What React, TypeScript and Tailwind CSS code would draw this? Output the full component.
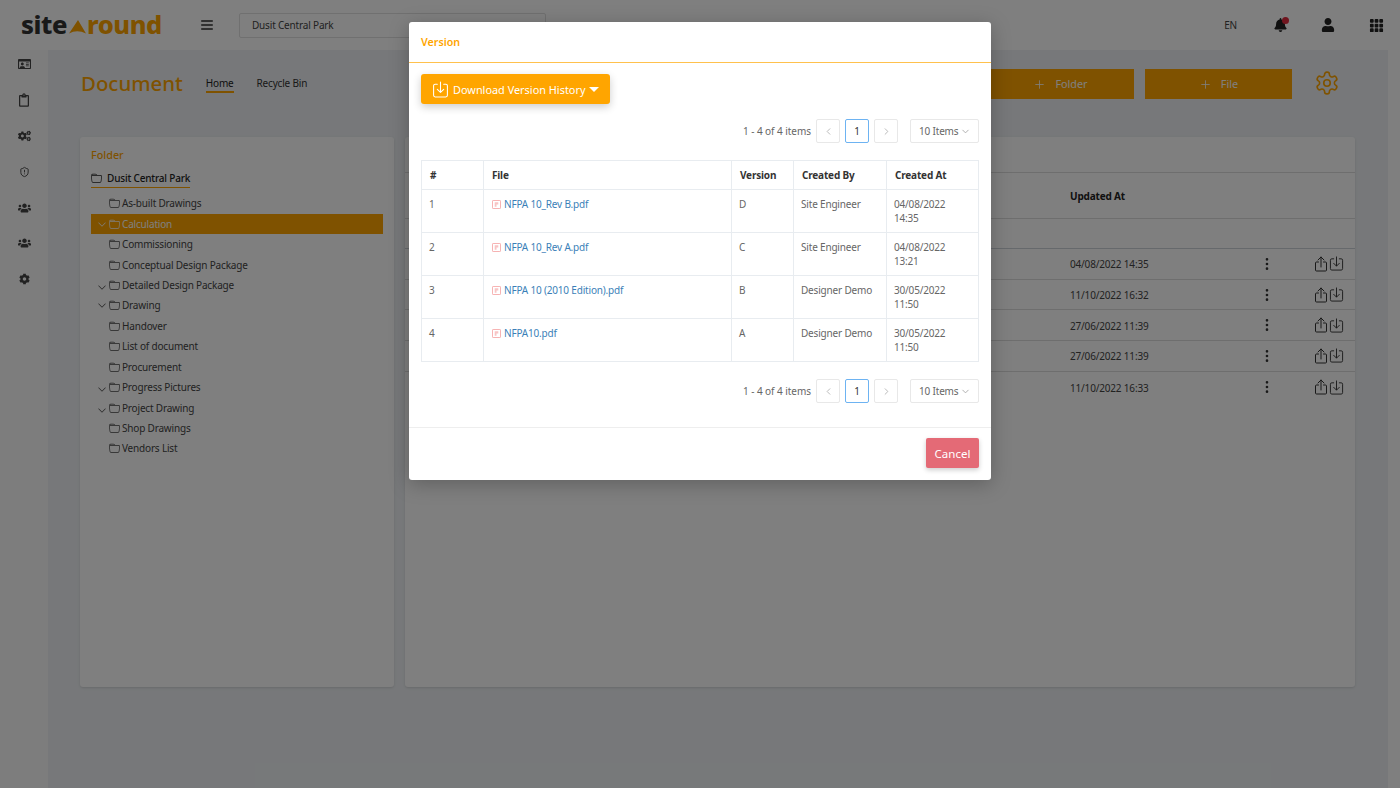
import React from 'react';
import { BsFolder, BsChevronDown, BsGrid3X3GapFill } from 'react-icons/bs';
import { FaBell, FaUser, FaUsers, FaCog, FaCogs, FaRegClipboard, FaRegIdCard } from 'react-icons/fa';
import { LuSettings, LuChevronLeft, LuChevronRight, LuChevronDown, LuMenu, LuShieldAlert, LuEllipsisVertical, LuPlus } from 'react-icons/lu';

const folders = [
  { name: 'As-built Drawings' },
  { name: 'Calculation', arrow: true, active: true },
  { name: 'Commissioning' },
  { name: 'Conceptual Design Package' },
  { name: 'Detailed Design Package', arrow: true, low: true },
  { name: 'Drawing', arrow: true },
  { name: 'Handover' },
  { name: 'List of document' },
  { name: 'Procurement' },
  { name: 'Progress Pictures', arrow: true, low: true },
  { name: 'Project Drawing', arrow: true, low: true },
  { name: 'Shop Drawings' },
  { name: 'Vendors List' },
];

const updates = ['04/08/2022 14:35', '11/10/2022 16:32', '27/06/2022 11:39', '27/06/2022 11:39', '11/10/2022 16:33'];

const versions = [
  { no: 1, file: 'NFPA 10_Rev B.pdf', version: 'D', by: 'Site Engineer', date: '04/08/2022', time: '14:35' },
  { no: 2, file: 'NFPA 10_Rev A.pdf', version: 'C', by: 'Site Engineer', date: '04/08/2022', time: '13:21' },
  { no: 3, file: 'NFPA 10 (2010 Edition).pdf', version: 'B', by: 'Designer Demo', date: '30/05/2022', time: '11:50' },
  { no: 4, file: 'NFPA10.pdf', version: 'A', by: 'Designer Demo', date: '30/05/2022', time: '11:50' },
];

const DownloadIcon = ({ className }: { className: string }) => (
  <svg viewBox="0 0 16 16" fill="none" stroke="currentColor" strokeWidth="1" strokeLinecap="round" strokeLinejoin="round" className={className}>
    <path d="M5 3H3a1.5 1.5 0 0 0-1.5 1.5v9A1.5 1.5 0 0 0 3 15h10a1.5 1.5 0 0 0 1.5-1.5v-9A1.5 1.5 0 0 0 13 3h-2" />
    <path d="M8 1v9.5M5 7.8l3 3 3-3" />
  </svg>
);

const ShareIcon = ({ className }: { className: string }) => (
  <svg viewBox="0 0 14 16" fill="none" stroke="currentColor" strokeWidth="1" strokeLinecap="round" strokeLinejoin="round" className={className}>
    <path d="M4.5 6H2.5a1 1 0 0 0-1 1v7a1 1 0 0 0 1 1h9a1 1 0 0 0 1-1V7a1 1 0 0 0-1-1h-2" />
    <path d="M7 11V1M4 4l3-3 3 3" />
  </svg>
);

const PdfIcon = () => (
  <svg viewBox="0 0 10 10" fill="none" className="w-[9px] h-[9px] shrink-0">
    <rect x="0.5" y="0.5" width="9" height="9" rx="0.8" stroke="#f5a5a5" />
    <path d="M3 2.5h4v2.5H5v2.5H3z" fill="#f8c4c4" />
  </svg>
);

const Pager = () => (
  <div className="flex items-center justify-end text-[#666]">
    <span className="mr-[5px] tracking-[-0.05px]">1 - 4 of 4 items</span>
    <div className="w-[24px] h-[24px] border border-[#e8e8e8] rounded-[2px] flex items-center justify-center text-[#b5b5b5]">
      <LuChevronLeft className="w-[11px] h-[11px]" />
    </div>
    <div className="w-[24px] h-[24px] ml-[5px] border border-[#6db3f2] rounded-[2px] flex items-center justify-center text-[#333]">1</div>
    <div className="w-[24px] h-[24px] ml-[5px] border border-[#e8e8e8] rounded-[2px] flex items-center justify-center text-[#b5b5b5]">
      <LuChevronRight className="w-[11px] h-[11px]" />
    </div>
    <div className="w-[69px] h-[24px] ml-[12px] pl-[8px] pr-[7px] border border-[#e8e8e8] rounded-[2px] flex items-center justify-between whitespace-nowrap text-[#666]">
      <span>10 Items</span>
      <LuChevronDown className="w-[11px] h-[11px] text-[#aaa]" />
    </div>
  </div>
);

const VersionModal = () => (
  <div className="absolute left-[409px] top-[22px] w-[582px] h-[458px] bg-white rounded-[3px] shadow-[0_4px_20px_rgba(0,0,0,0.25)] flex flex-col">
    <div className="h-[41px] px-[12px] flex items-center border-b border-[#ffc14d] text-[10.7px] tracking-normal font-semibold text-[#ffa500]">Version</div>
    <div className="px-[12px] pt-[11px] flex-1">
      <button className="w-[189px] h-[30px] bg-[#ffa500] rounded-[3px] text-white text-[10.9px] tracking-normal flex items-center pl-[11px] shadow-[0_3px_8px_rgba(0,0,0,0.2)]">
        <DownloadIcon className="w-[17px] h-[19px] mr-[4px]" />
        <span className="pt-[2px]">Download Version History</span>
        <span className="ml-[4px] w-0 h-0 border-x-[5px] border-x-transparent border-t-[5px] border-t-white" />
      </button>
      <div className="mt-[15px]"><Pager /></div>
      <div className="mt-[17px] border-t border-l border-[#e8ecf0] grid grid-cols-[62px_248px_62px_93px_92px] text-[#666]">
        {['#', 'File', 'Version', 'Created By', 'Created At'].map((h) => (
          <div key={h} className="h-[29px] px-[8px] pt-[1px] flex items-center font-bold text-[#333] border-r border-b border-[#e8ecf0]">{h}</div>
        ))}
        {versions.map((v) => (
          <React.Fragment key={v.no}>
            <div className="h-[43px] px-[7px] pt-[7px] leading-[14px] border-r border-b border-[#e8ecf0]">{v.no}</div>
            <div className="h-[43px] px-[8px] pt-[7px] leading-[14px] border-r border-b border-[#e8ecf0] flex items-start gap-[3px] text-[#3b7fb8]">
              <span className="mt-[3px]"><PdfIcon /></span>
              <span>{v.file}</span>
            </div>
            <div className="h-[43px] px-[7px] pt-[7px] leading-[14px] border-r border-b border-[#e8ecf0]">{v.version}</div>
            <div className="h-[43px] px-[7px] pt-[7px] leading-[14px] border-r border-b border-[#e8ecf0]">{v.by}</div>
            <div className="h-[43px] px-[7px] pt-[7px] leading-[14px] border-r border-b border-[#e8ecf0]">{v.date}<br />{v.time}</div>
          </React.Fragment>
        ))}
      </div>
      <div className="mt-[17px]"><Pager /></div>
    </div>
    <div className="h-[53px] px-[12px] pb-[2px] border-t border-[#eeeeee] flex items-center justify-end">
      <button className="w-[53px] h-[30px] pt-[1px] bg-[#e46a76] rounded-[2px] text-white text-[11.5px] tracking-normal shadow-[0_2px_5px_rgba(0,0,0,0.2)]">Cancel</button>
    </div>
  </div>
);

const App = () => {
  return (
    <div className="relative w-[1400px] h-[788px] overflow-hidden bg-white text-[10px] tracking-[-0.18px] text-[#333] font-['Noto_Sans','Open_Sans',sans-serif]">
      <header className="h-[50px] bg-white flex items-center">
        <div className="w-[207px] pl-[21px] flex items-center text-[25.5px] font-extrabold leading-none tracking-[-0.45px]">
          <span className="text-[#333]">site</span>
          <svg viewBox="0 0 20 14" className="w-[20px] h-[14px] mt-[3px]"><path d="M11 0l8 13.5Q10 9 2 13.5z" fill="#ffa500" /></svg>
          <span className="text-[#ffa500]">round</span>
        </div>
        <LuMenu className="w-[16px] h-[16px] -ml-[8px] text-[#333]" />
        <div className="w-[307px] h-[25px] ml-[24px] px-[12px] pt-[1px] border border-[#e0e0e0] rounded-[2px] flex items-center text-[#444]">Dusit Central Park</div>
        <div className="flex-1" />
        <span className="text-[#444] pt-[1px] mr-[37px]">EN</span>
        <div className="relative mr-[34px]">
          <FaBell className="w-[13px] h-[14px] text-[#222]" />
          <span className="absolute -top-[1px] right-[-2px] w-[7px] h-[7px] rounded-full bg-[#e0283c]" />
        </div>
        <FaUser className="w-[14px] h-[14px] mr-[34px] text-[#222]" />
        <BsGrid3X3GapFill className="w-[15px] h-[15px] mr-[16px] text-[#222]" />
      </header>
      <div className="flex h-[738px]">
        <aside className="w-[48px] bg-[#fbfbfb] flex flex-col items-center pt-[6px] gap-[19.9px] text-[#444]">
          <FaRegIdCard className="w-[13px] h-[16px]" />
          <FaRegClipboard className="w-[10px] h-[16px]" />
          <FaCogs className="w-[13px] h-[16px]" />
          <LuShieldAlert className="w-[11px] h-[16px]" />
          <FaUsers className="w-[13px] h-[16px]" />
          <FaUsers className="w-[13px] h-[16px]" />
          <FaCog className="w-[11px] h-[16px]" />
        </aside>
        <main className="w-[1340px] bg-[#eef1f4] flex flex-col">
          <div className="h-[87px] pl-[33px] pr-[48px] flex items-start">
            <h1 className="mt-[17px] text-[20.4px] tracking-normal leading-[32px] font-medium text-[#ffa500]">Document</h1>
            <div className="ml-[23px] mt-[26px] pb-[1px] border-b-2 border-[#ffa500] leading-[14px] text-[#222]">Home</div>
            <div className="ml-[23px] mt-[26px] leading-[14px] text-[#333]">Recycle Bin</div>
            <div className="flex-1" />
            <button className="w-[147px] h-[30px] mt-[19px] bg-[#ffa500] text-white text-[10.8px] tracking-normal flex items-center justify-center gap-[9px]"><LuPlus className="w-[13px] h-[13px] stroke-[1.5]" /><span className="pt-[1px]">Folder</span></button>
            <button className="w-[147px] h-[30px] mt-[19px] ml-[11px] bg-[#ffa500] text-white text-[10.8px] tracking-normal flex items-center justify-center gap-[9px]"><LuPlus className="w-[13px] h-[13px] stroke-[1.5]" /><span className="pt-[1px]">File</span></button>
            <LuSettings className="w-[26px] h-[26px] mt-[20px] ml-[22px] text-[#ffa500] stroke-[1.5]" />
          </div>
          <div className="flex pl-[32px] gap-[11px]">
            <section className="w-[314px] h-[550px] bg-white rounded-[3px] px-[11px] pt-[11px] shadow-sm">
              <div className="text-[10.8px] tracking-normal leading-[14px] font-medium text-[#ffa500]">Folder</div>
              <div className="mt-[9px] flex w-fit items-center gap-[5px] pt-[1px] pb-[2px] leading-[13px] border-b border-[#ffa500] font-medium text-[#222]">
                <BsFolder className="w-[11px] h-[11px]" />Dusit Central Park
              </div>
              <ul className="mt-[5.5px]">
                {folders.map((f) => (
                  <li key={f.name} className={`h-[20.45px] flex items-center ${f.active ? 'bg-[#ffa500] text-white' : 'text-[#444]'}`}>
                    <span className={`w-[18px] pl-[6px] ${f.low ? 'pt-[4px]' : ''}`}>{f.arrow && <BsChevronDown className="w-[10px] h-[9px]" />}</span>
                    <BsFolder className="w-[11px] h-[11px] mr-[2px]" />{f.name}
                  </li>
                ))}
              </ul>
            </section>
            <section className="w-[950px] h-[550px] bg-white rounded-[3px] shadow-sm">
              <div className="h-[36px] border-b border-[#dcdcdc]" />
              <div className="h-[46px] pl-[665px] pt-[1px] flex items-center font-bold text-[#222] border-b border-[#dcdcdc]">Updated At</div>
              <div className="h-[30px] border-b border-[#ccd2d8]" />
              {updates.map((u, i) => (
                <div key={i} className={`h-[30.7px] pl-[665px] flex items-center text-[#444] ${i < 4 ? 'border-b border-[#dcdcdc]' : ''}`}>
                  <span className="w-[189px] pt-[2px]">{u}</span>
                  <LuEllipsisVertical className="w-[16px] h-[18px] text-[#333]" />
                  <span className="w-[39px]" />
                  <ShareIcon className="w-[14px] h-[16px] text-[#333]" />
                  <DownloadIcon className="w-[15px] h-[15px] ml-[1px] text-[#333]" />
                </div>
              ))}
            </section>
          </div>
        </main>
        <div className="flex-1 bg-white" />
      </div>
      <div className="absolute inset-0 bg-black/50" />
      <VersionModal />
    </div>
  );
};

export default App;
